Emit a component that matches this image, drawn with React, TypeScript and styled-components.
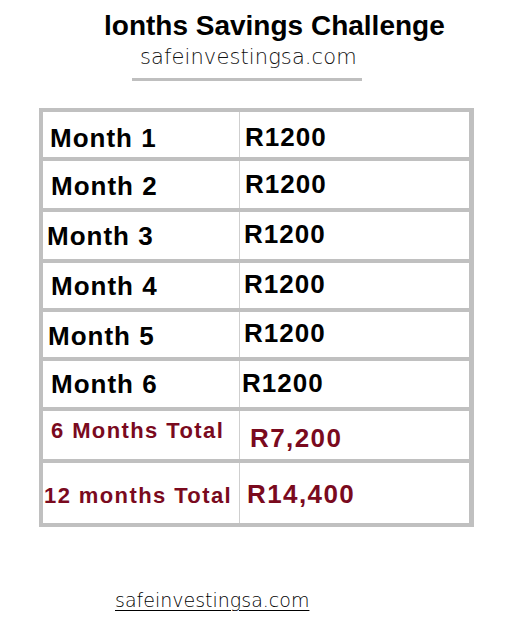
import React from "react";
import styled, { createGlobalStyle } from "styled-components";

// ====================== Global ======================
const GlobalStyle = createGlobalStyle`
  html, body {
    margin: 0;
    padding: 0;
    background: #ffffff;
  }
`;

// ====================== Styled Components ======================
const Page = styled.div`
  width: 525px;
  height: 624px;
  background: #ffffff;
  display: flex;
  flex-direction: column;
  align-items: flex-start;
  padding-top: 10px;
  box-sizing: border-box;
  overflow: hidden;
`;

const Title = styled.h1`
  margin: 0 0 0 104px;
  font-family: "Liberation Sans", Arial, sans-serif;
  font-weight: 700;
  font-size: 28px;
  line-height: 32px;
  color: #000;
`;

const SiteName = styled.div`
  margin: 2px 0 0 140px;
  font-family: "DejaVu Sans", sans-serif;
  font-weight: 200;
  font-size: 21px;
  line-height: 26px;
  letter-spacing: 0.1px;
  color: #111;
`;

const Rule = styled.div`
  margin: 8px 0 0 132px;
  width: 230px;
  height: 3px;
  background: #bfbfbf;
`;

const Table = styled.div`
  margin: 27px 0 0 39px;
  width: 435px;
  padding: 4px 5px 4px 4px;
  box-sizing: border-box;
  background: #c0c0c0;
  display: flex;
  flex-direction: column;
  gap: 4px;
`;

const Row = styled.div<{ $h: number }>`
  height: ${(p) => p.$h}px;
  display: grid;
  grid-template-columns: 196px 1fr;
  background: #ffffff;
`;

const Cell = styled.div<{ $x: number; $y: number; $red?: boolean; $small?: boolean }>`
  display: flex;
  align-items: flex-start;
  padding: ${(p) => p.$y}px 0 0 ${(p) => p.$x}px;
  font-family: "Liberation Sans", Arial, sans-serif;
  font-weight: 700;
  font-size: ${(p) => (p.$small ? 22 : 26)}px;
  line-height: 1;
  letter-spacing: ${(p) => (p.$red ? 1.4 : 1)}px;
  white-space: nowrap;
  color: ${(p) => (p.$red ? "#7a0a1e" : "#000")};
  box-sizing: border-box;

  & + & {
    border-left: 1px solid #cfcfcf;
  }
`;

const FooterLink = styled.a`
  margin: 62px 0 0 115px;
  font-family: "DejaVu Sans", sans-serif;
  font-weight: 200;
  font-size: 19px;
  line-height: 22px;
  color: #000;
  text-decoration: underline;
  text-underline-offset: 3px;
  text-decoration-thickness: 1px;
`;

// ====================== Data ======================
type RowData = {
  label: string;
  value: string;
  h: number;
  lx: number;
  ly: number;
  vx: number;
  vy: number;
  total?: boolean;
};

const rows: RowData[] = [
  { label: "Month 1", value: "R1200", h: 45, lx: 7, ly: 13, vx: 5, vy: 12 },
  { label: "Month 2", value: "R1200", h: 47, lx: 8, ly: 12, vx: 5, vy: 10 },
  { label: "Month 3", value: "R1200", h: 47, lx: 4, ly: 11, vx: 4, vy: 9 },
  { label: "Month 4", value: "R1200", h: 45, lx: 8, ly: 10, vx: 4, vy: 8 },
  { label: "Month 5", value: "R1200", h: 45, lx: 5, ly: 11, vx: 4, vy: 8 },
  { label: "Month 6", value: "R1200", h: 46, lx: 8, ly: 10, vx: 2, vy: 9 },
  { label: "6 Months Total", value: "R7,200", h: 48, lx: 8, ly: 9, vx: 10, vy: 14, total: true },
  { label: "12 months Total", value: "R14,400", h: 60, lx: 1, ly: 22, vx: 7, vy: 18, total: true },
];

// ===============================================================
const App: React.FC = () => {
  return (
    <>
      <GlobalStyle />
      <Page>
        <Title>lonths Savings Challenge</Title>
        <SiteName>safeinvestingsa.com</SiteName>
        <Rule />

        <Table>
          {rows.map((r) => (
            <Row key={r.label} $h={r.h}>
              <Cell $x={r.lx} $y={r.ly} $red={r.total} $small={r.total}>
                {r.label}
              </Cell>
              <Cell $x={r.vx} $y={r.vy} $red={r.total}>
                {r.value}
              </Cell>
            </Row>
          ))}
        </Table>

        <FooterLink href="#">safeinvestingsa.com</FooterLink>
      </Page>
    </>
  );
};

export default App;
